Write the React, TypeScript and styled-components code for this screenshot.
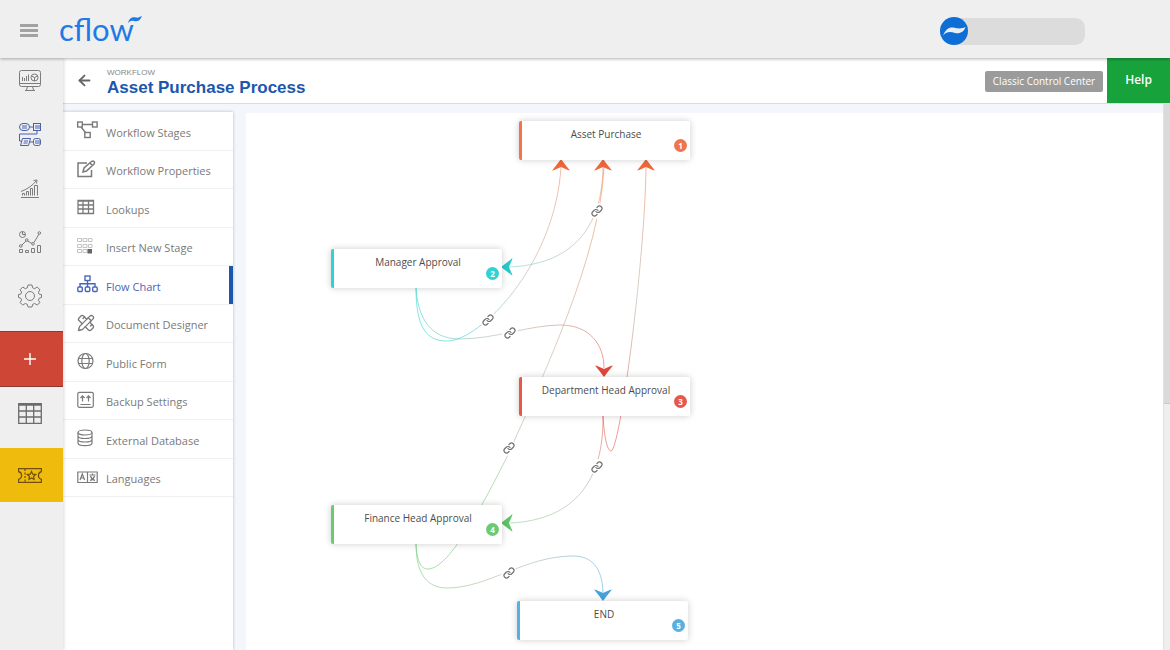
import React from 'react';
import styled, { createGlobalStyle } from 'styled-components';
import { ArrowLeft, Link, PencilRuler } from 'lucide-react';

const GlobalStyle = createGlobalStyle`
  * { box-sizing: border-box; }
  body { margin: 0; background: #f3f6fa; font-family: 'Open Sans', 'Noto Sans', sans-serif; }
  button { font: inherit; border: 0; padding: 0; background: none; cursor: pointer; }
  a { color: inherit; text-decoration: none; }
  svg { display: block; }
`;

const Page = styled.div`
  display: flex;
  flex-direction: column;
  height: 100vh;
  overflow: hidden;
`;

const TopBar = styled.header`
  display: flex;
  align-items: center;
  flex: none;
  height: 58px;
  padding: 0 85px 0 20px;
  background: #efefef;
  box-shadow: 0 1px 3px rgba(0, 0, 0, 0.3);
  position: relative;
  z-index: 2;
`;

const MenuToggle = styled.button`
  display: grid;
  gap: 2px;
  width: 18px;
  margin-top: 3px;
`;

const ToggleBar = styled.span`
  height: 3px;
  background: #a2a2a2;
`;

const Logo = styled.a`
  display: flex;
  align-items: flex-start;
  margin: 0 auto 0 21px;
  color: #1f7ae6;
  font: 31px/40px Lato, sans-serif;
`;

const Swoosh = styled.svg`
  margin: 7px 0 0 -8px;
`;

const Account = styled.button`
  display: flex;
  align-items: center;
  width: 145px;
  height: 27px;
  margin-top: 4px;
  border-radius: 10px;
  border-top-left-radius: 14px;
  border-bottom-left-radius: 14px;
  background: #dcdcdc;
`;

const Body = styled.div`
  display: flex;
  flex: 1;
  min-height: 0;
`;

const Rail = styled.nav`
  flex: none;
  width: 63px;
  background: #efefef;
  box-shadow: 1px 0 3px rgba(0, 0, 0, 0.15);
  position: relative;
  z-index: 1;
`;

const RailGroup = styled.div`
  padding-bottom: 3px;
`;

const RailLink = styled.a<{ $active?: boolean }>`
  display: flex;
  justify-content: center;
  height: 54px;
  padding: 10px 3px 0 0;
  color: ${(p) => (p.$active ? '#4a62ae' : '#7c7c7c')};
`;

const RailBlock = styled.a<{ $height: number; $fill?: string; $ink: string; $edge?: string }>`
  display: flex;
  align-items: center;
  justify-content: center;
  height: ${(p) => p.$height}px;
  padding-right: 3px;
  padding-bottom: ${(p) => (p.$fill ? 0 : 8)}px;
  background: ${(p) => p.$fill || 'transparent'};
  color: ${(p) => p.$ink};
  border: solid ${(p) => p.$edge || 'transparent'};
  border-width: ${(p) => (p.$edge ? '1px 0' : '0')};
`;

const Main = styled.main`
  display: flex;
  flex-direction: column;
  flex: 1;
  min-width: 0;
`;

const TitleBar = styled.div`
  display: flex;
  align-items: center;
  flex: none;
  height: 46px;
  padding-left: 13px;
  background: #fff;
  border-bottom: 1px solid #d9dcdf;
`;

const BackButton = styled.button`
  color: #666;
`;

const Titles = styled.div`
  margin: 0 auto 0 14px;
  padding-top: 4px;
  font-family: 'Liberation Sans', Arial, sans-serif;
`;

const Kicker = styled.div`
  color: #888;
  font-size: 8px;
  line-height: 11px;
`;

const Title = styled.h1`
  margin: 0;
  color: #1b57ad;
  font-size: 17px;
  line-height: 20px;
`;

const ClassicButton = styled.button`
  width: 118px;
  height: 21px;
  margin: 1px 4px 0 0;
  border-radius: 2px;
  background: #9b9b9b;
  color: #fff;
  font-size: 10px;
  white-space: nowrap;
`;

const HelpButton = styled.button`
  align-self: stretch;
  width: 63px;
  padding-bottom: 3px;
  background: #17a23c;
  color: #fff;
  font-size: 12px;
  font-weight: 600;
`;

const Workspace = styled.div`
  display: flex;
  flex: 1;
  min-height: 0;
`;

const SideMenu = styled.nav`
  flex: none;
  width: 170px;
  margin-top: 8px;
  background: #fff;
  box-shadow: 0 0 3px rgba(0, 0, 0, 0.25);
`;

const MenuList = styled.ul`
  display: flex;
  flex-direction: column;
  height: 385px;
  margin: 0;
  padding: 0;
  list-style: none;
`;

const MenuItem = styled.li`
  display: flex;
  flex: 1;
  border-bottom: 1px solid #edf1f4;
`;

const MenuLink = styled.a<{ $active?: boolean }>`
  display: flex;
  align-items: center;
  flex: 1;
  padding-left: 14px;
  color: ${(p) => (p.$active ? '#4a66b8' : '#7a7a7a')};
  border-right: 4px solid ${(p) => (p.$active ? '#1b57ad' : 'transparent')};
  font-size: 11px;
  line-height: 16px;
`;

const MenuIcon = styled.span`
  width: 29px;
  padding-bottom: 1px;
`;

const MenuLabel = styled.span`
  padding-top: 4px;
`;

const Canvas = styled.section`
  position: relative;
  flex: 1;
  margin: 9px 0 0 13px;
  overflow: hidden;
  background: #fff;
`;

const Edges = styled.svg`
  position: absolute;
  inset: 0;
`;

const Node = styled.article<{ $x: number; $y: number; $color: string }>`
  position: absolute;
  left: ${(p) => p.$x}px;
  top: ${(p) => p.$y}px;
  width: 171px;
  height: 39px;
  padding-top: 5px;
  background: #fff;
  border-left: 3px solid ${(p) => p.$color};
  border-radius: 2px;
  box-shadow: 0 0 7px rgba(0, 0, 0, 0.2);
  color: #4c4c4c;
  font-size: 10px;
  line-height: 16px;
  text-align: center;
`;

const Badge = styled.span<{ $color: string }>`
  position: absolute;
  right: 3px;
  bottom: 8px;
  width: 13px;
  height: 13px;
  border-radius: 50%;
  background: ${(p) => p.$color};
  color: #fff;
  font-size: 8px;
  font-weight: 700;
  line-height: 13px;
`;

const ScrollTrack = styled.div`
  flex: none;
  width: 7px;
  background: #eee;
  border-left: 1px solid #e2e2e2;
`;

const ScrollThumb = styled.div`
  height: 55%;
  background: #dadada;
  border-bottom: 1px solid #c8c8c8;
`;

type IconProps = { w?: number; h?: number; sw?: number; children: React.ReactNode };

const Icon = ({ w = 24, h = 24, sw = 1, children }: IconProps) => (
  <svg width={w} height={h} viewBox={`0 0 ${w} ${h}`} fill="none" stroke="currentColor" strokeWidth={sw} aria-hidden="true">
    {children}
  </svg>
);

const railLinks = [
  {
    label: 'Dashboard',
    icon: (
      <Icon>
        <rect x="1.5" y="2.5" width="21" height="16" rx="2" />
        <path d="M1.5 15.5h21M9.5 18.5l-1 3.5M14.5 18.5l1 3.5M7 22.5h10M4.5 13V9M6.5 13v-3M8.5 13V8M10.5 13V6.500" />
        <circle cx="16.500" cy="9.500" r="3.500" />
        <path d="M13.500 8l3 1.500l3-1.500M16.500 9.500V13" />
      </Icon>
    ),
  },
  {
    label: 'Workflows',
    active: true,
    icon: (
      <Icon>
        <rect x="1.500" y="1.500" width="10" height="7" rx="3.500" />
        <rect x="15.500" y="1.500" width="7" height="7" />
        <path d="M4 4h5M4 6h5M17 4h6M17 6h6M11.500 5h4M19 8.500v3.500H1.500v7h2M4.500 16.500h8l-2 7h-8zM6 19h4M5.500 21h4M11.500 20h4" />
        <rect x="15.500" y="16.500" width="7" height="7" rx="2" />
        <path d="M17 19h6M17 21h6" />
      </Icon>
    ),
  },
  {
    label: 'Reports',
    icon: (
      <Icon>
        <path d="M3 21.500h18M4.500 19.500v-2h2v2M8.500 19.500v-4h2v4M12.500 19.500v-7h2v7M16.500 19.500V9.500h3v10M3 15.500C10 13 15 9 18.500 4.500M15.500 4.500l3.500-.5l-.5 3.500" />
      </Icon>
    ),
  },
  {
    label: 'Analytics',
    icon: (
      <Icon>
        <circle cx="4.500" cy="4.500" r="3" />
        <path d="M4.500 1.500v3h3M4 15l4-4M9.500 11l4.500 2.500M16 12.500l5-8.500" />
        <circle cx="2.800" cy="16" r="1.300" />
        <circle cx="8.800" cy="10" r="1.300" />
        <circle cx="15" cy="13.800" r="1.300" />
        <circle cx="21.300" cy="3" r="1.300" />
        <path d="M1.500 19.500h3v3h-3zM7.500 20.500h3v2h-3zM13.500 18.500h3v4h-3zM19.500 15.500h3v7h-3z" />
      </Icon>
    ),
  },
  {
    label: 'Settings',
    icon: (
      <Icon>
        <circle cx="12" cy="12" r="4.500" />
        <path d="M10 1h4l.6 2.800l2 .9L19.200 3L22 5.800l-1.600 2.400l.8 2L23.500 10.500v3l-2.300.7l-.8 2L22 18.500L19.200 21l-2.500-1.500l-2 .8L14 23h-4l-.7-2.700l-2-.8L4.800 21L2 18.500l1.600-2.300l-.8-2L.5 13.500v-3l2.300-.4l.8-2L2 5.800L4.800 3l2.500 1.700l2-.9z" strokeLinejoin="round" />
      </Icon>
    ),
  },
];

const menu = [
  {
    label: 'Workflow Stages',
    icon: (
      <Icon w={21} h={18} sw={1.4}>
        <rect x="0.700" y="1" width="4.600" height="5" />
        <rect x="15.500" y="1" width="4.600" height="5" />
        <rect x="7.800" y="11.500" width="5.400" height="5" />
        <path d="M5.300 3.500h10.200M4 6l4.500 5.500" />
      </Icon>
    ),
  },
  {
    label: 'Workflow Properties',
    icon: (
      <Icon w={19} h={18} sw={1.5}>
        <path d="M10 3H1v13.500h13.500V10M6 12l1-4l7.500-6.500q1.500-1 2.500 0t0 2.500L9.500 11zM13 3l2.500 2.500" />
      </Icon>
    ),
  },
  {
    label: 'Lookups',
    icon: (
      <Icon w={18} h={18} sw={1.3}>
        <path d="M1 2.500h15.500v13H1zM1 3h15.500M1 7h15.500M1 11h15.500M6 2.500v13M11.500 2.500v13" />
      </Icon>
    ),
  },
  {
    label: 'Insert New Stage',
    icon: (
      <Icon w={18} h={18}>
        <g stroke="#c4c4c4">
          <path d="M.5 1.500h4v3h-4zM6 1.500h4v3H6zM11.500 1.500h3.500v3h-3.500zM.5 7.500h4v3h-4zM6 7.500h4v3H6zM11.500 7.500h3.500v3h-3.500zM.5 12.500h4v3h-4zM6 12.500h4v3H6z" />
        </g>
        <rect x="11" y="12.500" width="3.500" height="3.500" fill="#666" stroke="#666" />
      </Icon>
    ),
  },
  {
    label: 'Flow Chart',
    active: true,
    icon: (
      <Icon w={21} h={18} sw={1.4}>
        <rect x="8" y="1" width="5" height="4.500" />
        <rect x="0.800" y="12" width="4.500" height="4.500" rx="1" />
        <rect x="8.300" y="12" width="4.500" height="4.500" rx="1" />
        <rect x="15.700" y="12" width="4.500" height="4.500" rx="1" />
        <path d="M10.500 5.500V12M3 12V8.800h15V12" />
      </Icon>
    ),
  },
  { label: 'Document Designer', icon: <PencilRuler size={18} strokeWidth={1.8} aria-hidden="true" /> },
  {
    label: 'Public Form',
    icon: (
      <Icon w={18} h={18} sw={1.2}>
        <circle cx="8.500" cy="9" r="7.500" />
        <ellipse cx="8.500" cy="9" rx="3.700" ry="7.500" />
        <path d="M1.500 6.500h14M1.500 11.500h14" />
      </Icon>
    ),
  },
  {
    label: 'Backup Settings',
    icon: (
      <Icon w={18} h={18} sw={1.2}>
        <rect x="0.800" y="1.300" width="15.500" height="15" rx="1.500" />
        <path d="M5.500 10.500V5M3.500 7l2-2.200L7.500 7M11.500 10.500V5M9.500 7l2-2.200l2 2.200M3.500 13.500h10" />
      </Icon>
    ),
  },
  {
    label: 'External Database',
    icon: (
      <Icon w={18} h={18} sw={1.2}>
        <ellipse cx="8" cy="3.500" rx="7" ry="2.500" />
        <path d="M1 3.500v10.500c0 3.500 14 3.500 14 0V3.500M1 7c0 3.300 14 3.300 14 0M1 10.500c0 3.300 14 3.300 14 0" />
      </Icon>
    ),
  },
  {
    label: 'Languages',
    icon: (
      <Icon w={21} h={18} sw={1.2}>
        <path d="M.8 4h19.400v10.500H.8zM10.500 4v10.500M3 12l2.300-6L7.600 12M3.800 10h3M12.500 7h6M15.500 5.500V7M13.500 8q1 3.500 4.500 4.500M17.500 8q-1 3.500-4.500 4.500" />
      </Icon>
    ),
  },
];

const colors = { orange: '#f2744a', teal: '#2fd3d3', red: '#e8574a', green: '#6ccb72', blue: '#58b0e0' };

const nodes = [
  { name: 'Asset Purchase', x: 273, y: 8, color: colors.orange },
  { name: 'Manager Approval', x: 85, y: 136, color: colors.teal },
  { name: 'Department Head Approval', x: 273, y: 264, color: colors.red },
  { name: 'Finance Head Approval', x: 85, y: 392, color: colors.green },
  { name: 'END', x: 271, y: 488, color: colors.blue },
];

const edges = [
  { d: 'M357 52C357 117 324 152 262 154', from: [357, 52, '#f0906c'], to: [262, 154, '#6cd8d8'] },
  { d: 'M170 175C170 217 182 228 201 228C234 228 309 152 315 54', from: [170, 175, '#2fd3d3'], to: [315, 54, '#f09070'] },
  { d: 'M170 175C172 205 184 226 214 226C249 226 284 212 314 212C344 212 358 232 358 255', from: [170, 175, '#2fd3d3'], to: [358, 255, '#e8574a'] },
  { d: 'M170 431C171 447 174 456 182 456C204 456 239 387 261 344C299 259 354 142 358 54', from: [170, 431, '#6ccb72'], to: [358, 54, '#f2844a'] },
  { d: 'M357 303C358 322 361 338 365 338C374 338 399 147 400 54', from: [357, 303, '#e8574a'], to: [400, 54, '#f2845a'] },
  { d: 'M357 303C358 367 329 407 264 410', from: [357, 303, '#e8574a'], to: [264, 410, '#8ccb92'] },
  { d: 'M170 431C170 462 182 475 201 475C242 475 279 443 327 443C349 443 357 459 357 482', from: [170, 431, '#6ccb72'], to: [357, 482, '#58b0e0'] },
] as const;

const arrows = [
  { x: 315, y: 46, turn: 0, color: '#f0683c' },
  { x: 357, y: 46, turn: 0, color: '#f0683c' },
  { x: 400, y: 46, turn: 0, color: '#f0683c' },
  { x: 255, y: 154, turn: -90, color: '#2bcaca' },
  { x: 358, y: 264, turn: 180, color: '#e0463c' },
  { x: 255, y: 410, turn: -90, color: '#5fc468' },
  { x: 357, y: 488, turn: 180, color: '#46a2da' },
];

const links = [[351, 98], [242, 207], [264, 220], [351, 354], [263, 335], [263, 460]];

export default function App() {
  return (
    <Page>
      <GlobalStyle />
      <TopBar>
        <MenuToggle aria-label="Toggle menu">
          <ToggleBar /><ToggleBar /><ToggleBar />
        </MenuToggle>
        <Logo href="#">
          cflow
          <Swoosh width="16" height="8" viewBox="0 0 16 8" aria-hidden="true">
            <path d="M2 7C4 1 7 1 10 1.500C12 2 14 1 16 0C14 5 11 6 8 5C5 4.500 4 5 2 7Z" fill="#1f7ae6" />
          </Swoosh>
        </Logo>
        <Account aria-label="Account">
          <svg width="28" height="28" viewBox="0 0 28 28" aria-hidden="true">
            <circle cx="14" cy="14" r="14" fill="#0d6fd6" />
            <path d="M3 18.500C6 12 9 10 13 10.500C18 11.500 21 12 25.500 10C24 15 20 17 15 16C10 14.500 7 14.500 3 18.500Z" fill="#e9eef4" />
          </svg>
        </Account>
      </TopBar>
      <Body>
        <Rail aria-label="Main">
          <RailGroup>
            {railLinks.map((r) => (
              <RailLink key={r.label} href="#" aria-label={r.label} $active={r.active}>{r.icon}</RailLink>
            ))}
          </RailGroup>
          <RailBlock href="#" aria-label="Add" $height={56} $fill="#cd4636" $ink="#fff" $edge="#8d3a30">
            <Icon w={12} h={12} sw={1.4}><path d="M6 0v12M0 6h12" /></Icon>
          </RailBlock>
          <RailBlock href="#" aria-label="Tables" $height={61} $ink="#6c6c6c">
            <Icon w={24} h={21} sw={1.3}>
              <path d="M.7.700h22.600v19.600H.7zM.7 2h22.600M.7 8h22.600M.7 14h22.600M8.300 1v19.300M15.700 1v19.300" />
            </Icon>
          </RailBlock>
          <RailBlock href="#" aria-label="Tickets" $height={54} $fill="#efbb0c" $ink="#70500c">
            <Icon w={24} h={15} sw={1.2}>
              <path d="M.6.700h22.800v3q-3 .8-3 3.800t3 3.800v3H.6v-3q3-.8 3-3.800T.6 3.700z" />
              <path d="M7 1v13" strokeDasharray="2 1.500" />
              <path d="M13.500 3.500l1.200 2.700l3 .3l-2.200 2l.6 2.900l-2.600-1.500l-2.600 1.500l.6-2.900l-2.200-2l3-.3z" />
            </Icon>
          </RailBlock>
        </Rail>
        <Main>
          <TitleBar>
            <BackButton aria-label="Back"><ArrowLeft size={17} strokeWidth={2.600} /></BackButton>
            <Titles>
              <Kicker>WORKFLOW</Kicker>
              <Title>Asset Purchase Process</Title>
            </Titles>
            <ClassicButton>Classic Control Center</ClassicButton>
            <HelpButton>Help</HelpButton>
          </TitleBar>
          <Workspace>
            <SideMenu aria-label="Workflow">
              <MenuList>
                {menu.map((m) => (
                  <MenuItem key={m.label}>
                    <MenuLink href="#" $active={m.active}>
                      <MenuIcon>{m.icon}</MenuIcon>
                      <MenuLabel>{m.label}</MenuLabel>
                    </MenuLink>
                  </MenuItem>
                ))}
              </MenuList>
            </SideMenu>
            <Canvas aria-label="Flow chart">
              <Edges width="100%" height="100%" aria-hidden="true">
                <defs>
                  {edges.map((e, i) => (
                    <linearGradient key={i} id={`edge${i}`} gradientUnits="userSpaceOnUse" x1={e.from[0]} y1={e.from[1]} x2={e.to[0]} y2={e.to[1]}>
                      <stop offset="0" stopColor={e.from[2]} />
                      <stop offset="0.500" stopColor="#b9b3a8" />
                      <stop offset="1" stopColor={e.to[2]} />
                    </linearGradient>
                  ))}
                </defs>
                {edges.map((e, i) => (
                  <path key={i} d={e.d} fill="none" stroke={`url(#edge${i})`} strokeOpacity="0.600" />
                ))}
                {links.map(([x, y]) => (
                  <g key={`${x}-${y}`} transform={`translate(${x} ${y})`}>
                    <circle r="8" fill="#fff" />
                    <Link x={-6} y={-6} size={12} color="#707070" strokeWidth={2.400} />
                  </g>
                ))}
                {arrows.map((a) => (
                  <path
                    key={`${a.x}-${a.y}`}
                    transform={`translate(${a.x} ${a.y}) rotate(${a.turn})`}
                    d="M0 0C3 4 6 8 9 11.500C6 11 3 9 0 8C-3 9 -6 11 -9 11.500C-6 8 -3 4 0 0Z"
                    fill={a.color}
                  />
                ))}
              </Edges>
              {nodes.map((n, i) => (
                <Node key={n.name} $x={n.x} $y={n.y} $color={n.color}>
                  {n.name}
                  <Badge $color={n.color}>{i + 1}</Badge>
                </Node>
              ))}
            </Canvas>
            <ScrollTrack><ScrollThumb /></ScrollTrack>
          </Workspace>
        </Main>
      </Body>
    </Page>
  );
}
